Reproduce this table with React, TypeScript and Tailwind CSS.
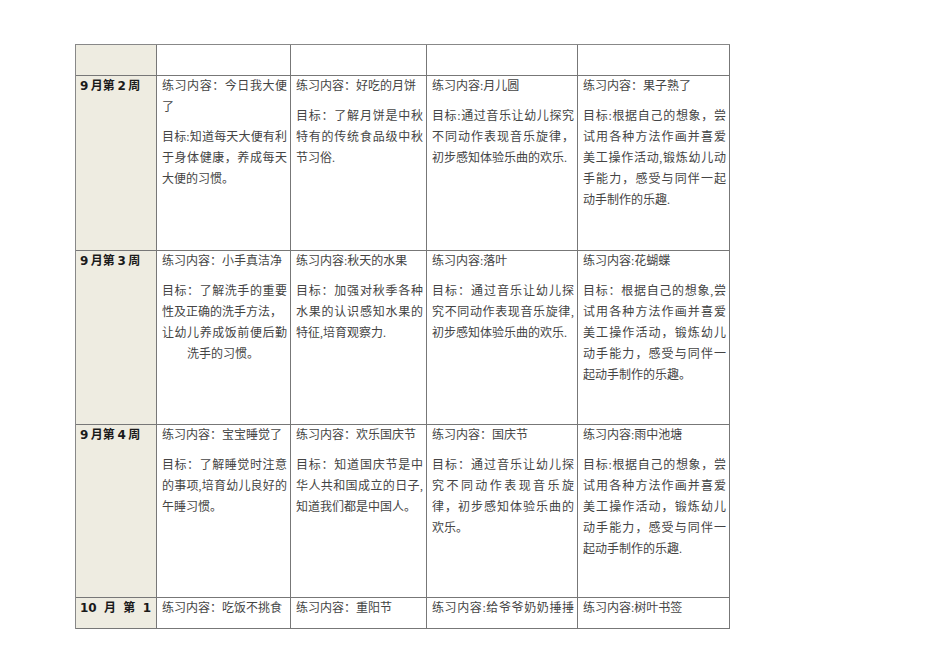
import React from 'react';

// a line is either justified to the cell width or left alone; "indent" lines carry a 2em indent
type Line = { t: string; full?: boolean; indent?: boolean };
type Para = Line[];

interface WeekRow {
  month: string;
  week: string;
  cells: Para[][];
}

const L = (t: string): Line => ({ t, full: true });
const E = (t: string): Line => ({ t });

const weeks: WeekRow[] = [
  {
    month: '9',
    week: '2',
    cells: [
      [[L('练习内容：今日我大便'), E('了')], [L('目标:知道每天大便有利'), L('于身体健康，养成每天'), E('大便的习惯。')]],
      [[E('练习内容：好吃的月饼')], [L('目标：了解月饼是中秋'), L('特有的传统食品级中秋'), E('节习俗.')]],
      [[E('练习内容:月儿圆')], [L('目标:通过音乐让幼儿探究'), L('不同动作表现音乐旋律，'), E('初步感知体验乐曲的欢乐.')]],
      [
        [E('练习内容：果子熟了')],
        [L('目标:根据自己的想象，尝'), L('试用各种方法作画并喜爱'), L('美工操作活动,锻炼幼儿动'), L('手能力，感受与同伴一起'), E('动手制作的乐趣.')],
      ],
    ],
  },
  {
    month: '9',
    week: '3',
    cells: [
      [
        [E('练习内容：小手真洁净')],
        [L('目标：了解洗手的重要'), E('性及正确的洗手方法，'), L('让幼儿养成饭前便后勤'), { t: '洗手的习惯。', indent: true }],
      ],
      [[E('练习内容:秋天的水果')], [L('目标：加强对秋季各种'), L('水果的认识感知水果的'), E('特征,培育观察力.')]],
      [[E('练习内容:落叶')], [L('目标：通过音乐让幼儿探'), L('究不同动作表现音乐旋律,'), E('初步感知体验乐曲的欢乐.')]],
      [
        [E('练习内容:花蝴蝶')],
        [L('目标：根据自己的想象,尝'), L('试用各种方法作画并喜爱'), L('美工操作活动，锻炼幼儿'), L('动手能力，感受与同伴一'), E('起动手制作的乐趣。')],
      ],
    ],
  },
  {
    month: '9',
    week: '4',
    cells: [
      [[E('练习内容：宝宝睡觉了')], [L('目标：了解睡觉时注意'), L('的事项,培育幼儿良好的'), E('午睡习惯。')]],
      [[E('练习内容：欢乐国庆节')], [L('目标：知道国庆节是中'), L('华人共和国成立的日子,'), E('知道我们都是中国人。')]],
      [[E('练习内容：国庆节')], [L('目标：通过音乐让幼儿探'), L('究不同动作表现音乐旋'), L('律，初步感知体验乐曲的'), E('欢乐。')]],
      [
        [E('练习内容:雨中池塘')],
        [L('目标:根据自己的想象，尝'), L('试用各种方法作画并喜爱'), L('美工操作活动，锻炼幼儿'), L('动手能力，感受与同伴一'), E('起动手制作的乐趣.')],
      ],
    ],
  },
];

const lastRow = [
  '练习内容：吃饭不挑食',
  '练习内容：重阳节',
  '练习内容:给爷爷奶奶捶捶',
  '练习内容:树叶书签',
];

const bodyFont = "font-['Liberation_Serif','Noto_Sans_CJK_SC',serif]";
const labelFont = "font-['DejaVu_Sans','Noto_Sans_CJK_SC',sans-serif]";
const cellBorder = 'border-r border-b border-[#777]';

const Cell = ({ paras }: { paras: Para[] }) => (
  <div className={`${cellBorder} bg-white pl-[5px] pr-[3px] overflow-hidden`}>
    {paras.map((p, pi) => (
      <div key={pi} className={pi === 0 ? '' : 'mt-[9px]'}>
        {p.map((ln, li) => (
          <div
            key={li}
            className={
              ln.full
                ? 'text-justify [text-align-last:justify]'
                : ln.indent
                  ? 'pl-[25px]'
                  : ''
            }
          >
            {ln.t}
          </div>
        ))}
      </div>
    ))}
  </div>
);

const Label = ({ month, week }: { month: string; week: string }) => (
  <div className={`${cellBorder} bg-[#eeece1] pl-[4px] pr-[5px] overflow-hidden`}>
    <div className={`flex font-bold text-[#1a1a1a] ${labelFont}`}>
      <span className="pr-[2.5px]">{month}</span>
      <span>月第</span>
      <span className="px-[2.5px]">{week}</span>
      <span>周</span>
    </div>
  </div>
);

export default function App() {
  return (
    <div className="min-h-[672px] w-[950px] bg-white pt-[44px] pl-[75px]">
      <div
        className={`grid w-[655px] grid-cols-[81px_134px_136px_151px_152px] grid-rows-[31px_175px_174px_173px_31px] border-t border-l border-[#888] text-[12px] leading-[21px] text-[#444] ${bodyFont}`}
      >
        {/* blank header row */}
        <div className={`${cellBorder} bg-[#eeece1]`} />
        <div className={`${cellBorder} bg-white`} />
        <div className={`${cellBorder} bg-white`} />
        <div className={`${cellBorder} bg-white`} />
        <div className={`${cellBorder} bg-white`} />

        {weeks.map((w) => (
          <React.Fragment key={w.week}>
            <Label month={w.month} week={w.week} />
            {w.cells.map((c, ci) => (
              <Cell key={ci} paras={c} />
            ))}
          </React.Fragment>
        ))}

        {/* row is cut off by the page edge, label spreads over the cell */}
        <div className={`${cellBorder} bg-[#eeece1] pl-[4px] pr-[5px] overflow-hidden`}>
          <div className={`flex justify-between font-bold text-[#1a1a1a] ${labelFont}`}>
            <span>10</span>
            <span>月</span>
            <span>第</span>
            <span>1</span>
          </div>
        </div>
        {lastRow.map((t, i) => (
          <Cell key={i} paras={[[i === 2 ? L(t) : E(t)]]} />
        ))}
      </div>
    </div>
  );
}
